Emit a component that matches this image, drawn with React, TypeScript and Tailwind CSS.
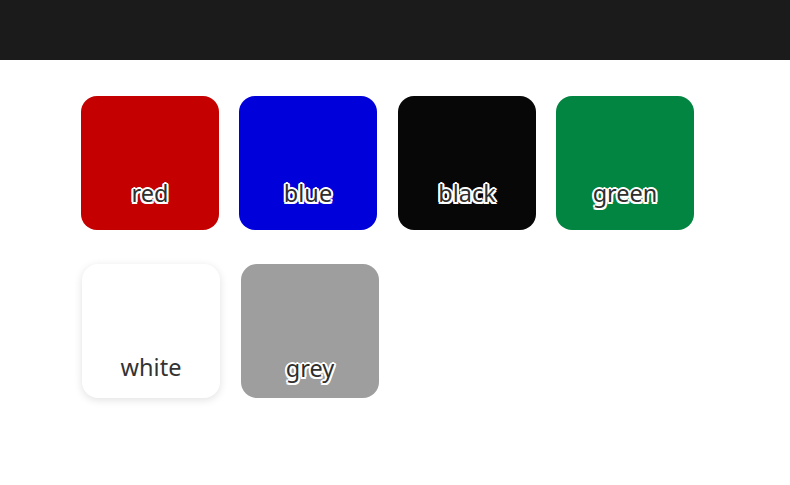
const row1 = [
  { name: 'red', bg: 'bg-[#c40000]', gap: '' },
  { name: 'blue', bg: 'bg-[#0000db]', gap: 'ml-[20px]' },
  { name: 'black', bg: 'bg-[#070707]', gap: 'ml-[21px]' },
  { name: 'green', bg: 'bg-[#028541]', gap: 'ml-[20px]' },
]

const outline =
  '[text-shadow:1.5px_1.5px_0_#fff,-1.5px_-1.5px_0_#fff,1.5px_-1.5px_0_#fff,-1.5px_1.5px_0_#fff,0_2px_0_#fff,0_-2px_0_#fff,2px_0_0_#fff,-2px_0_0_#fff]'

function Tile({ name, bg, gap }: { name: string; bg: string; gap: string }) {
  return (
    <div className={`flex h-[134px] w-[138px] items-end justify-center rounded-2xl pb-[23px] ${bg} ${gap}`}>
      <span className={`text-[23.5px] leading-[28px] text-[#2e2e2e] ${outline}`}>{name}</span>
    </div>
  )
}

export default function App() {
  return (
    <div className="min-h-[485px] bg-white font-['Noto_Sans',sans-serif]">
      <header className="h-[60px] bg-[#1b1b1b]" />
      <main className="flex flex-col gap-[34px] pl-[81px] pt-[36px]">
        <div className="flex">
          {row1.map((c) => (
            <Tile key={c.name} {...c} />
          ))}
        </div>
        <div className="flex gap-[21px] pl-px">
          <div className="flex h-[134px] w-[138px] items-end justify-center rounded-2xl bg-white pb-[17px] shadow-[0_2px_8px_rgba(0,0,0,0.12)]">
            <span className="text-[23.5px] leading-[28px] text-[#333]">white</span>
          </div>
          <div className="flex h-[134px] w-[138px] items-end justify-center rounded-2xl bg-[#9e9e9e] pb-[16px]">
            <span className={`text-[23.5px] leading-[28px] text-[#2e2e2e] ${outline}`}>grey</span>
          </div>
        </div>
      </main>
    </div>
  )
}
